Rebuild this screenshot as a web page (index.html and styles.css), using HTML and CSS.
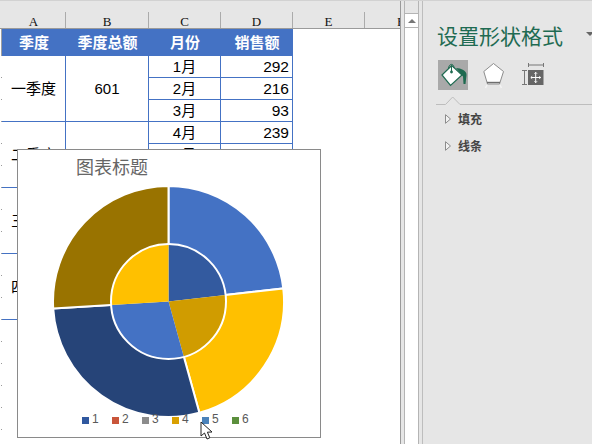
FILE: index.html
```html
<!DOCTYPE html>
<html lang="zh">
<head>
<meta charset="utf-8">
<title>设置形状格式</title>
<link rel="stylesheet" href="styles.css">
</head>
<body>
<div class="app">
  <section class="sheet">
    <div class="colhead">
      <span class="col col-a">A</span>
      <span class="col col-b">B</span>
      <span class="col col-c">C</span>
      <span class="col col-d">D</span>
      <span class="col col-e">E</span>
      <span class="col col-f">F</span>
    </div>
    <div class="gridarea">
      <div class="gutter"></div>
      <table class="data">
        <colgroup><col class="w-a"><col class="w-b"><col class="w-c"><col class="w-d"></colgroup>
        <thead>
          <tr><th>季度</th><th>季度总额</th><th>月份</th><th>销售额</th></tr>
        </thead>
        <tbody>
          <tr><td rowspan="3">一季度</td><td rowspan="3">601</td><td>1月</td><td class="num">292</td></tr>
          <tr><td>2月</td><td class="num">216</td></tr>
          <tr><td>3月</td><td class="num">93</td></tr>
          <tr><td rowspan="3">二季度</td><td rowspan="3">577</td><td>4月</td><td class="num">239</td></tr>
          <tr><td>5月</td><td class="num"></td></tr>
          <tr><td>6月</td><td class="num"></td></tr>
          <tr><td rowspan="3">三季度</td><td rowspan="3"></td><td>7月</td><td class="num"></td></tr>
          <tr><td>8月</td><td class="num"></td></tr>
          <tr><td>9月</td><td class="num"></td></tr>
          <tr><td rowspan="3">四季度</td><td rowspan="3"></td><td>10月</td><td class="num"></td></tr>
          <tr><td>11月</td><td class="num"></td></tr>
          <tr><td>12月</td><td class="num"></td></tr>
        </tbody>
      </table>
    </div>

    <figure class="chart">
      <figcaption class="chart-title">图表标题</figcaption>
      <svg class="donut" width="231" height="231" viewBox="0 0 231 231">
        <g stroke="#fff" stroke-width="2">
          <path fill="#4472c4" d="M115.5 115.5 L115.5 0 A115.5 115.5 0 0 1 230.26 102.43 Z"/>
          <path fill="#ffc000" d="M115.5 115.5 L230.26 102.43 A115.5 115.5 0 0 1 146.36 226.79 Z"/>
          <path fill="#264478" d="M115.5 115.5 L146.36 226.79 A115.5 115.5 0 0 1 .22 122.55 Z"/>
          <path fill="#997300" d="M115.5 115.5 L.22 122.55 A115.5 115.5 0 0 1 115.5 0 Z"/>
        </g>
        <path fill="#335a9f" d="M115.5 115.5 L115.5 58 A57.5 57.5 0 0 1 172.63 108.99 Z"/>
        <path fill="#d09c00" d="M115.5 115.5 L172.63 108.99 A57.5 57.5 0 0 1 130.87 170.91 Z"/>
        <path fill="#4472c4" d="M115.5 115.5 L130.87 170.91 A57.5 57.5 0 0 1 58.11 119.01 Z"/>
        <path fill="#ffc000" d="M115.5 115.5 L58.11 119.01 A57.5 57.5 0 0 1 115.5 58 Z"/>
        <circle cx="115.5" cy="115.5" r="57.5" fill="none" stroke="#fff" stroke-width="2"/>
      </svg>
      <ul class="legend">
        <li><i class="sw sw1"></i>1</li>
        <li><i class="sw sw2"></i>2</li>
        <li><i class="sw sw3"></i>3</li>
        <li><i class="sw sw4"></i>4</li>
        <li><i class="sw sw5"></i>5</li>
        <li><i class="sw sw6"></i>6</li>
      </ul>
    </figure>

    <svg class="cursor" width="14" height="20" viewBox="0 0 14 20">
      <path d="M1 1 L1 15 L4.5 12 L7 18 L9.8 16.8 L7.4 11.2 L12 11 Z" fill="#fff" stroke="#222" stroke-width="1"/>
    </svg>
  </section>

  <div class="vscroll">
    <div class="vbtn"><span class="vup"></span></div>
  </div>

  <aside class="panel">
    <header class="panel-head">
      <h1 class="panel-title">设置形状格式</h1>
      <span class="panel-menu"></span>
    </header>
    <div class="tabs">
      <span class="tab tab-on">
        <svg width="30" height="30" viewBox="0 0 30 30">
          <path d="M4 15 L13.7 5.5 L24 15 L12.5 25.5 Z" fill="#fff" stroke="#1e6a50" stroke-width="1.2"/>
          <path d="M10.5 9 C10.5 3 16 3 16 8" fill="none" stroke="#1e6a50" stroke-width="1"/>
          <path d="M13.5 6 V12" stroke="#1e6a50" stroke-width="1"/>
          <circle cx="13.5" cy="12" r="1.4" fill="#1e6a50"/>
          <path d="M18 8 C23 8 29 11 28.5 15 L27.5 24 L25.5 24 L25 16.5 Z" fill="#1e6a50"/>
        </svg>
      </span>
      <span class="tab">
        <svg width="24" height="30" viewBox="0 0 24 30">
          <path d="M10.5 3.5 L20.5 11.5 L16.5 24 L4.5 24 L.8 11.5 Z" fill="#fff" stroke="#8c8c8c" stroke-width="1"/>
          <path d="M4 22.5 H17" stroke="#6e6e6e" stroke-width="1.4"/>
          <path d="M4 25 L2.5 28 M17 25 L18.5 28" stroke="#f4f4f4" stroke-width="1.5"/>
        </svg>
      </span>
      <span class="tab">
        <svg width="22" height="30" viewBox="0 0 22 30">
          <path d="M6.5 3 V7 M21.5 3 V7 M6.5 5 H21.5" stroke="#777" stroke-width="1" fill="none"/>
          <path d="M0 10.5 H5 M0 24.5 H5 M2.5 10.5 V24.5" stroke="#777" stroke-width="1" fill="none"/>
          <rect x="6" y="10" width="15.5" height="15" fill="#666"/>
          <path d="M13.7 12.5 V22.5 M9 17.5 H18.5 M12.5 13.7 L13.7 12.3 L15 13.7 M12.5 21.3 L13.7 22.7 L15 21.3 M10.2 16.3 L8.8 17.5 L10.2 18.7 M17.3 16.3 L18.7 17.5 L17.3 18.7" stroke="#fff" stroke-width="1" fill="none"/>
        </svg>
      </span>
    </div>
    <svg class="tabline" width="156" height="9" viewBox="0 0 156 9">
      <path d="M0 8.5 H9.5 L16.7 1 L24 8.5 H156" fill="none" stroke="#bdbdbd" stroke-width="1"/>
    </svg>
    <div class="section">
      <svg class="caret" width="6" height="10" viewBox="0 0 6 10"><path d="M.5 .7 L5.5 5 L.5 9.3 Z" fill="#f2f2f2" stroke="#8c8c8c" stroke-width="1"/></svg>
      <span>填充</span>
    </div>
    <div class="section">
      <svg class="caret" width="6" height="10" viewBox="0 0 6 10"><path d="M.5 .7 L5.5 5 L.5 9.3 Z" fill="#f2f2f2" stroke="#8c8c8c" stroke-width="1"/></svg>
      <span>线条</span>
    </div>
  </aside>
</div>
</body>
</html>
```
FILE: styles.css
```css
* { box-sizing: border-box; }
html, body { margin: 0; padding: 0; }
body {
  width: 592px;
  height: 444px;
  overflow: hidden;
  background: #e6e6e6;
  font-family: "Liberation Sans", "Noto Sans CJK SC", sans-serif;
}
.app {
  display: flex;
  width: 592px;
  height: 444px;
  border-top: 1px solid #d2d2d2;
  background: #e6e6e6;
}

/* Worksheet */
.sheet {
  position: relative;
  flex: 0 0 401px;
  height: 443px;
  background: #fff;
  border-right: 1px solid #9a9a9a;
  overflow: hidden;
}
.colhead {
  display: flex;
  height: 28px;
  padding: 11px 0 0 2px;
  background: #e6e6e6;
  border-bottom: 1px solid #9a9a9a;
  overflow: hidden;
}
.col {
  flex: 0 0 72px;
  height: 16px;
  border-right: 1px solid #ababab;
  text-align: center;
  font: 13px/19px "Liberation Serif", serif;
  color: #111;
}
.colhead .col-a { flex-basis: 64px; }
.colhead .col-b { flex-basis: 83px; }
.gridarea { display: flex; align-items: flex-start; }
.gutter {
  flex: 0 0 2px;
  height: 415px;
  background:
    repeating-linear-gradient(to bottom, #fff 0 21px, #9a9a9a 21px 22px) right / 1px 100% no-repeat,
    linear-gradient(#a0a0a0, #a0a0a0) left / 1px 100% no-repeat;
  background-position: right 27px, 1px 0;
}
.data {
  width: 291px;
  table-layout: fixed;
  border-collapse: separate;
  border-spacing: 0;
}
.w-a { width: 64px; }
.w-b { width: 83px; }
.w-c { width: 72px; }
.w-d { width: 72px; }
.data th {
  height: 27px;
  padding: 0;
  background: #4472c4;
  color: #fff;
  font-size: 15px;
  font-weight: 700;
  line-height: 26px;
  text-align: center;
}
.data td {
  height: 22px;
  padding: 0;
  border-right: 1px solid #4472c4;
  border-bottom: 1px solid #4472c4;
  color: #000;
  font-size: 15px;
  line-height: 18px;
  text-align: center;
}
.data td.num {
  padding-right: 3px;
  font-size: 15.5px;
  text-align: right;
}

/* Chart floating over the sheet */
.chart {
  position: absolute;
  left: 17px;
  top: 148px;
  width: 304px;
  height: 289px;
  margin: 0;
  background: #fff;
  border: 1px solid #8a8a8a;
}
.chart-title {
  height: 36px;
  padding-left: 58px;
  color: #666;
  font-size: 18px;
  line-height: 36px;
}
.donut { display: block; margin-left: 35px; }
.legend {
  display: flex;
  margin: 0;
  padding: 0 0 0 64px;
  list-style: none;
}
.legend li {
  display: flex;
  flex: 0 0 30px;
  gap: 3px;
  color: #595959;
  font-size: 12px;
  line-height: 5px;
}
.sw { display: block; width: 7px; height: 7px; }
.sw1 { background: #30589f; }
.sw2 { background: #c9553a; }
.sw3 { background: #8c8c8c; }
.sw4 { background: #d9a000; }
.sw5 { background: #4a82ba; }
.sw6 { background: #5b8f3c; }
.cursor { position: absolute; left: 200px; top: 420px; }

/* Scrollbar */
.vscroll {
  flex: 0 0 15px;
  height: 443px;
  margin: 0 3px 0 3px;
  padding-top: 12px;
  background: linear-gradient(#e6e6e6 12px, #fff 12px);
  border-left: 1px solid #b4b4b4;
  border-right: 1px solid #b4b4b4;
}
.vbtn {
  display: flex;
  align-items: center;
  justify-content: center;
  height: 15px;
  background: #fff;
  border-top: 1px solid #b4b4b4;
  border-bottom: 1px solid #b4b4b4;
}
.vup {
  width: 0;
  height: 0;
  border-left: 4px solid transparent;
  border-right: 4px solid transparent;
  border-bottom: 4px solid #777;
}

/* Format pane */
.panel {
  flex: 1 1 auto;
  min-width: 0;
  height: 443px;
  padding-left: 15px;
  border-left: 1px solid #bdbdbd;
  overflow: hidden;
}
.panel-head {
  display: flex;
  align-items: center;
  justify-content: space-between;
  height: 30px;
  margin: 21px -2px 8px -1px;
}
.panel-title {
  margin: 0;
  color: #1f6b52;
  font-size: 21px;
  font-weight: 400;
  line-height: 30px;
}
.panel-menu {
  width: 0;
  height: 0;
  margin-bottom: 6px;
  border-left: 4px solid transparent;
  border-right: 4px solid transparent;
  border-top: 4px solid #666;
}
.tabs { display: flex; align-items: center; gap: 15px; height: 30px; }
.tab { display: block; height: 30px; }
.tab svg { display: block; }
.tab-on { width: 30px; background: #a9a9a9; }
.tabline { display: block; margin: 6px 0 0 -2px; }
.section {
  display: flex;
  align-items: center;
  gap: 7px;
  height: 27px;
  padding-left: 7px;
  color: #444;
  font-size: 12px;
  font-weight: 700;
}
.caret { display: block; }
```
